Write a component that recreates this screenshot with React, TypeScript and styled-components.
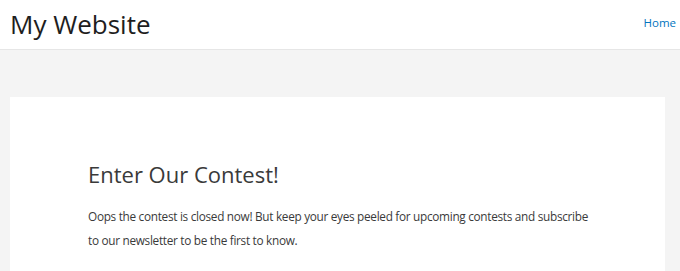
import React from "react";
import styled, { createGlobalStyle } from "styled-components";

const Global = createGlobalStyle`
  html, body { margin: 0; padding: 0; }
  body {
    background: #f4f4f4;
    font-family: "Open Sans", "Noto Sans", sans-serif;
    overflow: hidden;
  }
`;

const Header = styled.header`
  display: flex;
  align-items: center;
  justify-content: space-between;
  height: 49px;
  padding: 0 4px 0 10px;
  background: #ffffff;
  border-bottom: 1px solid #e6e6e6;
`;

const SiteTitle = styled.div`
  font-size: 26px;
  font-weight: 400;
  color: #1e1e1e;
  line-height: 1;
  margin-top: -2px;
`;

const NavLink = styled.a`
  font-size: 11.5px;
  color: #0274be;
  text-decoration: none;
  margin-top: -4px;
`;

const Main = styled.main`
  padding: 47px 15px 0 10px;
`;

const Card = styled.article`
  background: #ffffff;
  padding: 63px 72px 40px 78px;
  min-height: 200px;
`;

const Title = styled.h1`
  margin: 0 0 15px;
  font-size: 22px;
  font-weight: 400;
  line-height: 1.3;
  color: #3a3a3a;
`;

const Text = styled.p`
  margin: 0;
  font-size: 11.8px;
  letter-spacing: -0.3px;
  line-height: 24px;
  color: #3a3a3a;
`;

export default function App() {
  return (
    <>
      <Global />
      <Header>
        <SiteTitle>My Website</SiteTitle>
        <NavLink href="#">Home</NavLink>
      </Header>
      <Main>
        <Card>
          <Title>Enter Our Contest!</Title>
          <Text>
            Oops the contest is closed now! But keep your eyes peeled for upcoming contests and subscribe to our newsletter to be the first to know.
          </Text>
        </Card>
      </Main>
    </>
  );
}
